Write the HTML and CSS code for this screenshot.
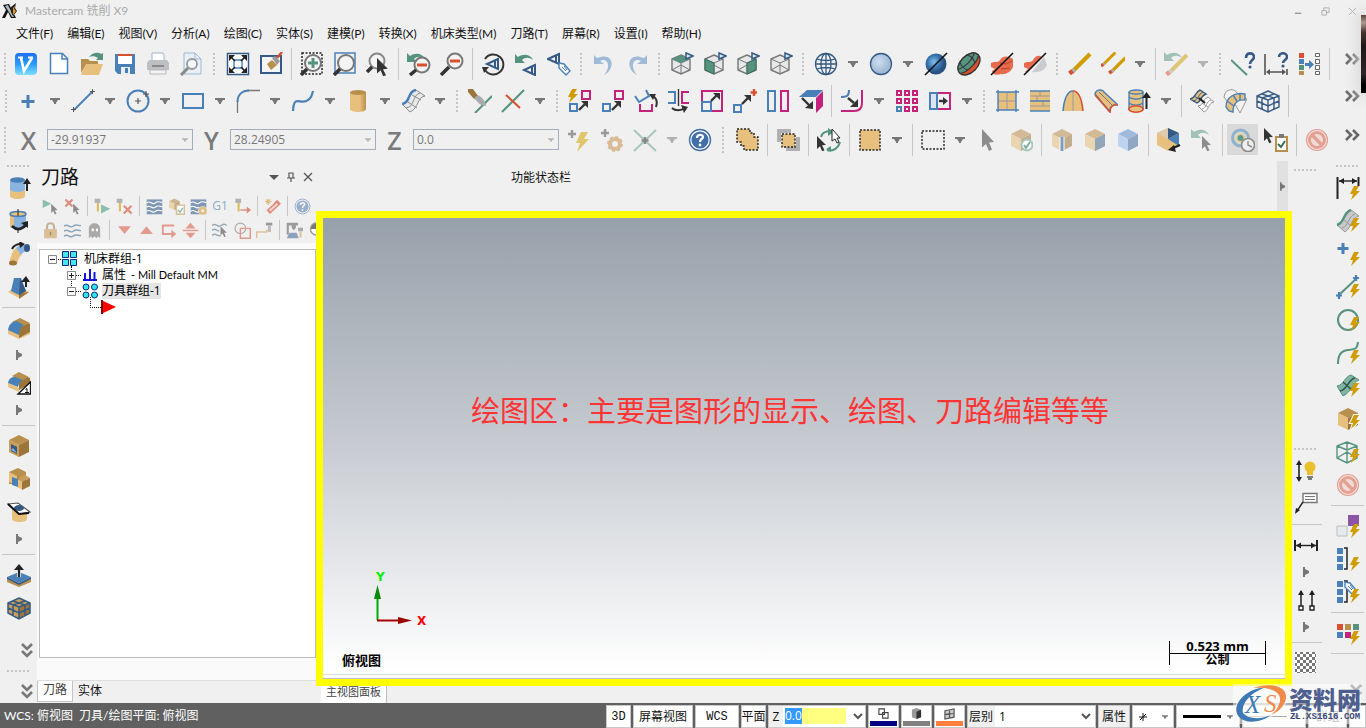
FILE: index.html
```html
<!DOCTYPE html>
<html lang="zh-CN">
<head>
<meta charset="utf-8">
<title>Mastercam 铣削 X9</title>
<link rel="stylesheet" href="styles.css">
</head>
<body>
<svg class="sprite" aria-hidden="true">
<defs>
<linearGradient id="gV" x1="0" y1="0" x2="0" y2="1"><stop offset="0" stop-color="#1d6ff0"/><stop offset=".5" stop-color="#2b9bff"/><stop offset="1" stop-color="#7fe0ff"/></linearGradient>
<linearGradient id="gCyl"><stop offset="0" stop-color="#e8c07d"/><stop offset=".6" stop-color="#e8c07d"/><stop offset="1" stop-color="#b88f4c"/></linearGradient>
<radialGradient id="gBall" cx=".4" cy=".4"><stop offset="0" stop-color="#7fc0f0"/><stop offset=".6" stop-color="#3a76b0"/><stop offset="1" stop-color="#2a5280"/></radialGradient>
<radialGradient id="gPale" cx=".4" cy=".4"><stop offset="0" stop-color="#cfdff2"/><stop offset="1" stop-color="#a3bad4"/></radialGradient>
<pattern id="pChk" width="6" height="6" patternUnits="userSpaceOnUse"><path d="M0 0h3v3H0zM3 3h3v3H3z" fill="#777"/></pattern>
<g id="bolt"><path d="M4 0h5L6 5h4L1 14l2-6H0z" fill="#d09c00"/></g>
<g id="cur"><path d="M0 0l9 9-4 .3 2.5 5-2.3 1-2.2-5L0 13z" fill="#333"/></g>
<g id="curG"><path d="M0 0l9 9-4 .3 2.5 5-2.3 1-2.2-5L0 13z" fill="#8c8c8c"/></g>
<g id="ret"><path d="M0 0l3 3c6-4 13-2 15 3-4-3-8-3-11 0l3 3H0z" fill="#56937e"/></g>
<g id="eye"><path d="M13 1L2 6l11 5z" fill="none" stroke="#345a85" stroke-width="2"/><path d="M10 3v6" stroke="#345a85" stroke-width="2"/></g>
<g id="wire"><path d="M11 3l9 4v11l-9 4-9-4V7z" fill="#e6e8ea" stroke="#777" stroke-width="1.4"/><path d="M2 7l9 4 9-4M11 11v11M2 18l9-5 9 5" fill="none" stroke="#777"/></g>
<g id="flag"><path d="M16 1l7 3-7 3z" fill="#e3eaf2" stroke="#345a85" stroke-width="1.5"/></g>
<g id="pen"><path d="M4 20L22 2" stroke="#d09c00" stroke-width="4"/><path d="M3.500 20.500l3-3" stroke="#aab0bb" stroke-width="4"/><path d="M1.500 21.500l3-2.500" stroke="#d9502f" stroke-width="4.500"/></g>
<g id="box"><path d="M12 1l10 5-10 5L2 6z" fill="#b88f4c"/><path d="M2 6l10 5v12L2 18z" fill="#e8c07d"/><path d="M22 6l-10 5v12l10-5z" fill="#9c753a"/></g>
<g id="q"><circle cx="12" cy="12" r="10.5" fill="#fff" stroke="#426fa8" stroke-width="1.4"/><circle cx="12" cy="12" r="8.6" fill="#426fa8"/><path d="M9 10c0-4 6-4 6-1 0 2-3 2-3 5" fill="none" stroke="#fff" stroke-width="2.2"/><circle cx="12" cy="17" r="1.4" fill="#fff"/></g>
<g id="tag"><path d="M0 0l5 1 6 7-4 4-7-7z" fill="#fff" stroke="#4a80b8" stroke-width="1.4"/><path d="M3 4l4 4M5 3l3 4" stroke="#4a80b8"/></g>
<g id="toolT"><path d="M1 1h8v6H1z" fill="#8a8a8a"/><path d="M4 7h3v12H4z" fill="#d09c00"/></g>
</defs>
<symbol id="vlogo" viewBox="0 0 24 24"><rect x="1" y="1" width="22" height="22" rx="4" fill="url(#gV)"/><path d="M4 5.500h5M14 5.500h5" stroke="#fff" stroke-width="2"/><path d="M7 6l3 13L18 6" fill="none" stroke="#fff" stroke-width="2.600"/></symbol>
<symbol id="new" viewBox="0 0 24 24"><path d="M3.500 1.500h12l5 5v15h-17z" fill="#fff" stroke="#4a80b8" stroke-width="1.500"/><path d="M15 2v5h5" fill="none" stroke="#4a80b8" stroke-width="1.500"/></symbol>
<symbol id="open" viewBox="0 0 24 24"><path d="M1 7h7l2 2h8v4H6L1 21z" fill="#b88f4c"/><path d="M6 12h17l-4 11H1z" fill="#e8c07d"/><path d="M9 5c4-5 9-5 12-3l2-1v7h-7l2-2c-3-2-6-2-9-1z" fill="#56937e"/></symbol>
<symbol id="save" viewBox="0 0 24 24"><path d="M2 2h20v20H5l-3-3z" fill="#4a80b8"/><path d="M5 4h14v8H5z" fill="#fff"/><path d="M5 2h14v2H5z" fill="#d9502f"/><path d="M8 15h9v7H8z" fill="#e9eef4"/><path d="M12 16h3v5h-3z" fill="#4a80b8"/></symbol>
<symbol id="print" viewBox="0 0 24 24"><path d="M7 1h10l1 2v7H6V1z" fill="#fff" stroke="#9db4d0"/><path d="M3 8h18l2 3v7H1v-7z" fill="#bdbfc2"/><path d="M6 13h12v2H6z" fill="#888"/><path d="M4 18h16v4H4z" fill="#f4f4f4" stroke="#b5b7ba"/></symbol>
<symbol id="preview" viewBox="0 0 24 24"><path d="M5 1h11l6 6v15H5z" fill="#e9eff6" stroke="#9db9d6"/><path d="M16 1v6h6" fill="none" stroke="#9db9d6"/><circle cx="13" cy="12" r="5" fill="#f4f6f8" stroke="#999" stroke-width="1.800"/><path d="M9 16l-7 7" stroke="#888" stroke-width="3"/></symbol>
<symbol id="fit" viewBox="0 0 24 24"><path d="M1.500 1.500h21v21h-21z" fill="#fff" stroke="#345a85" stroke-width="1.500"/><path d="M8 8h8v8H8z" fill="#fff" stroke="#4a80b8" stroke-width="1.400"/><path d="M3 3h6L3 9zM21 3v6l-6-6zM3 21v-6l6 6zM21 21h-6l6-6z" fill="#222"/><path d="M4 4l5 5M20 4l-5 5M4 20l5-5M20 20l-5-5" stroke="#222" stroke-width="1.600"/></symbol>
<symbol id="brush" viewBox="0 0 24 24"><path d="M2 4h20v17H2z" fill="#f4f4f4" stroke="#345a85" stroke-width="2"/><path d="M8 12l5-4 5 5-6 5z" fill="#b88f4c"/><path d="M13 6l3-2 5 5-3 4z" fill="#999"/><path d="M18 6l5-6" stroke="#d9502f" stroke-width="2.500"/></symbol>
<symbol id="zwin" viewBox="0 0 24 24"><path d="M2 1h20v21H2z" fill="none" stroke="#222" stroke-width="1.500" stroke-dasharray="2 1.500"/><circle cx="13" cy="11" r="8" fill="#f4f4f4" stroke="#777" stroke-width="2"/><path d="M13 6v10M8 11h10" stroke="#56937e" stroke-width="3"/><path d="M7 17l-6 6" stroke="#333" stroke-width="3.500"/></symbol>
<symbol id="ztgt" viewBox="0 0 24 24"><path d="M2 1h20v20H2z" fill="none" stroke="#4a80b8" stroke-width="1.500"/><circle cx="13" cy="11" r="8" fill="#f4f4f4" stroke="#777" stroke-width="2"/><path d="M7 17l-6 6" stroke="#333" stroke-width="3.500"/></symbol>
<symbol id="zsel" viewBox="0 0 24 24"><circle cx="11" cy="9" r="7.500" fill="#f4f4f4" stroke="#888" stroke-width="2"/><path d="M6 15l-5 5" stroke="#333" stroke-width="3.500"/><use href="#cur" transform="translate(11 6) scale(1.200)"/></symbol>
<symbol id="zprev" viewBox="0 0 24 24"><use href="#ret" x="0" y="1"/><circle cx="15" cy="13" r="7.500" fill="#f4f4f4" stroke="#777" stroke-width="2"/><path d="M10 13h10" stroke="#d9502f" stroke-width="3"/><path d="M9 18l-6 5" stroke="#333" stroke-width="3.500"/></symbol>
<symbol id="zout" viewBox="0 0 24 24"><circle cx="15" cy="9" r="7.500" fill="#f4f4f4" stroke="#777" stroke-width="2"/><path d="M10 9h10" stroke="#d9502f" stroke-width="3"/><path d="M9 15l-8 8" stroke="#333" stroke-width="3.500"/></symbol>
<symbol id="rot" viewBox="0 0 24 24"><path d="M4 7a10 10 0 1 1 0 11" fill="none" stroke="#333" stroke-width="2"/><path d="M1 15h7l-5 6z" fill="#333"/><use href="#eye" x="4" y="6"/></symbol>
<symbol id="eprev" viewBox="0 0 24 24"><use href="#ret" x="1" y="2"/><use href="#eye" x="8" y="12"/></symbol>
<symbol id="etag" viewBox="0 0 24 24"><use href="#eye" x="-1" y="1"/><use href="#tag" x="12" y="11"/></symbol>
<symbol id="undo" viewBox="0 0 24 24"><path d="M2 3v9h10l-4-3c7-4 12 5 4 14 12-6 10-24-7-17z" fill="#a0bbd8"/></symbol>
<symbol id="redo" viewBox="0 0 24 24"><path d="M22 3v9H12l4-3C9 5 4 14 12 23 0 17 2-1 19 6z" fill="#a0bbd8"/></symbol>
<symbol id="c1" viewBox="0 0 24 24"><use href="#wire"/><path d="M2 7l9-4 9 4-9 4z" fill="#56937e"/><use href="#flag"/></symbol>
<symbol id="c2" viewBox="0 0 24 24"><use href="#wire"/><path d="M2 7l9 4v11l-9-4z" fill="#56937e" stroke="#386a58"/><use href="#flag"/></symbol>
<symbol id="c3" viewBox="0 0 24 24"><use href="#wire"/><path d="M20 7l-9 4v11l9-4z" fill="#56937e" stroke="#386a58"/><use href="#flag"/></symbol>
<symbol id="c4" viewBox="0 0 24 24"><use href="#wire"/><use href="#flag"/></symbol>
<symbol id="globe" viewBox="0 0 24 24"><g fill="none" stroke="#345a85" stroke-width="1.300"><circle cx="12" cy="12" r="10.500"/><ellipse cx="12" cy="12" rx="5" ry="10.500"/><path d="M12 1v22M1 12h22M3 7c5 2 13 2 18 0M3 17c5-2 13-2 18 0"/></g></symbol>
<symbol id="ball" viewBox="0 0 24 24"><circle cx="12" cy="12" r="10.500" fill="url(#gPale)" stroke="#345a85" stroke-width="1.300"/></symbol>
<symbol id="ballx" viewBox="0 0 24 24"><circle cx="12" cy="12" r="10.500" fill="url(#gBall)"/><path d="M1 23L23 1" stroke="#111" stroke-width="1.600"/></symbol>
<symbol id="shell" viewBox="0 0 24 24"><g transform="rotate(-45 12 12)"><ellipse cx="12" cy="12" rx="13" ry="8.500" fill="#d9502f" stroke="#333" stroke-width="1.300"/><path d="M-1 12C-1 1 25 1 25 12c-4 5-22 5-26 0z" fill="#56937e" stroke="#333" stroke-width="1.200"/><path d="M7 4.500c-2 3-2 7 0 11M17 4.500c2 3 2 7 0 11M1 8.500c6 3 16 3 22 0" fill="none" stroke="#333"/></g></symbol>
<symbol id="redx" viewBox="0 0 24 24"><path d="M1 11c4-2 7 0 9-3 3-5 9-4 13-1v8c-2 5-8 8-12 7-5 2-9 0-9-3l3-2-4-2z" fill="#e56a4e"/><path d="M10 11l6 1 6-3M11 17l9-1" fill="none" stroke="#b8402a"/><path d="M1 23L23 1" stroke="#111" stroke-width="1.600"/></symbol>
<symbol id="grayx" viewBox="0 0 24 24"><path d="M1 11c4-2 7 0 9-3 3-5 6-5 9-3L5 20H2l3-3-4-2z" fill="#e56a4e"/><path d="M21 5l3 8c-2 5-8 8-15 7z" fill="#c9cbce"/><path d="M1 23L23 1" stroke="#111" stroke-width="1.600"/></symbol>
<symbol id="pencil" viewBox="0 0 24 24"><use href="#pen"/></symbol>
<symbol id="pencils" viewBox="0 0 24 24"><use href="#pen" transform="translate(-1 -1) scale(.7)"/><use href="#pen" transform="translate(7 4) scale(.8)"/></symbol>
<symbol id="pundo" viewBox="0 0 24 24"><g opacity=".5"><use href="#ret"/><use href="#pen" x="1" y="1"/></g></symbol>
<symbol id="lineq" viewBox="0 0 24 24"><path d="M0 8l16 15" stroke="#56937e" stroke-width="2"/><path d="M15 6c0-6 8-6 8-1 0 3-4 3-4 7" fill="none" stroke="#345a85" stroke-width="2.600"/><circle cx="19" cy="15" r="1.600" fill="#345a85"/></symbol>
<symbol id="dimq" viewBox="0 0 24 24"><path d="M1 2v21M23 17v6M3 20h18" stroke="#555" stroke-width="1.600"/><path d="M2 20l4-3v6zM22 20l-4-3v6z" fill="#555"/><path d="M15 5c0-5 8-5 8 0 0 3-4 3-4 6" fill="none" stroke="#345a85" stroke-width="2.600"/><circle cx="19" cy="14" r="1.600" fill="#345a85"/></symbol>
<symbol id="list" viewBox="0 0 24 24"><path d="M2 1h5v5H2z" fill="#d9502f"/><path d="M2 7h5v5H2z" fill="#4a80b8"/><path d="M2 13h5v5H2z" fill="#56937e"/><path d="M2 19h5v4H2z" fill="#b88f4c"/><path d="M8 11h4V8l5 4.500-5 4.500v-3H8z" fill="#4a80b8"/><path d="M18.500 1.500h4v3h-4zM18.500 7.500h4v4h-4zM18.500 13.500h4v4h-4zM18.500 19.500h4v3h-4z" fill="#fff" stroke="#666"/></symbol>
<symbol id="pt" viewBox="0 0 24 24"><path d="M12 6v13M5.500 12.500h13" stroke="#4a80b8" stroke-width="3"/></symbol>
<symbol id="ln" viewBox="0 0 24 24"><path d="M3 21L21 3" stroke="#4a80b8" stroke-width="2"/><path d="M2.500 18v5M0 20.500h5M21.500 0v5M19 2.500h5" stroke="#555"/></symbol>
<symbol id="circ" viewBox="0 0 24 24"><circle cx="12" cy="12" r="10.500" fill="none" stroke="#4a80b8" stroke-width="2"/><path d="M12 9v6M9 12h6M20 2v6M17 5h6" stroke="#555" stroke-width="1.200"/></symbol>
<symbol id="rect" viewBox="0 0 24 24"><path d="M2 5h20v14H2z" fill="none" stroke="#4a80b8" stroke-width="2"/></symbol>
<symbol id="fil" viewBox="0 0 24 24"><path d="M1.500 24V11M11 1.500h13" stroke="#777" stroke-width="1.300"/><path d="M1.500 13C1.500 6 6 1.500 13 1.500" fill="none" stroke="#4a80b8" stroke-width="2"/></symbol>
<symbol id="spl" viewBox="0 0 24 24"><path d="M2 22C3 4 10 17 17 11c4-2 4-6 5-9" fill="none" stroke="#4a80b8" stroke-width="2.200"/></symbol>
<symbol id="cyl" viewBox="0 0 24 24"><path d="M4 3v17c0 4 16 4 16 0V3z" fill="url(#gCyl)"/><ellipse cx="12" cy="3.500" rx="8" ry="2.500" fill="#b88f4c"/></symbol>
<symbol id="surf" viewBox="0 0 24 24"><path d="M1 15C10 14 6 2 15 1l9 6C16 8 18 19 9 23z" fill="#e8e9eb" stroke="#8b8b8b"/><path d="M5 19C14 18 11 6 19 4M7 13l9 6M11 6l9 5" fill="none" stroke="#8b8b8b"/><path d="M1 15C10 14 6 2 15 1" fill="none" stroke="#4a80b8" stroke-width="2.400"/></symbol>
<symbol id="trim" viewBox="0 0 24 24"><path d="M7 24L24 7" stroke="#56937e" stroke-width="2"/><path d="M0 0h5l5 7-4 3-6-7z" fill="#9c753a"/><path d="M6 9l4-3c4 2 8 7 8 11-5 0-8-3-12-8z" fill="#a8abb0"/></symbol>
<symbol id="xx" viewBox="0 0 24 24"><path d="M1 23L23 1" stroke="#56937e" stroke-width="2"/><path d="M5 6l14 13" stroke="#d9502f" stroke-width="2"/></symbol>
<symbol id="t1" viewBox="0 0 24 24"><use href="#bolt"/><path d="M14 2h8v8h-8z" fill="none" stroke="#c4237c" stroke-width="2"/><path d="M2 15h7v7H2z" fill="none" stroke="#4a80b8" stroke-width="2"/><path d="M11 21l6-6" stroke="#333" stroke-width="2.400"/><path d="M13 12h7v7z" fill="#333"/></symbol>
<symbol id="t2" viewBox="0 0 24 24"><path d="M14 2h8v8h-8z" fill="none" stroke="#c4237c" stroke-width="2"/><path d="M2 15h7v7H2z" fill="none" stroke="#4a80b8" stroke-width="2"/><path d="M11 21l6-6" stroke="#333" stroke-width="2.400"/><path d="M13 12h7v7z" fill="#333"/></symbol>
<symbol id="t3" viewBox="0 0 24 24"><path d="M1 7l4 6 10-6-3-6" fill="none" stroke="#4a80b8" stroke-width="2"/><path d="M6 15v7h12v-7" fill="none" stroke="#c4237c" stroke-width="2"/><path d="M22 18c2-6 0-9-3-11" fill="none" stroke="#333" stroke-width="2"/><path d="M15 5h7l-3 6z" fill="#333"/></symbol>
<symbol id="t4" viewBox="0 0 24 24"><path d="M1 3h7v11H1" fill="none" stroke="#4a80b8" stroke-width="2"/><path d="M22 3h-7v11h7" fill="none" stroke="#c4237c" stroke-width="2"/><path d="M11.500 0v17" stroke="#333" stroke-width="1.400"/><path d="M5 19c3 3 9 3 13 0" fill="none" stroke="#333" stroke-width="2"/><path d="M14 16l7 2-4 6z" fill="#333"/></symbol>
<symbol id="t5" viewBox="0 0 24 24"><path d="M2 2h20v20H2z" fill="none" stroke="#c4237c" stroke-width="2"/><path d="M2 13h9v9H2z" fill="#f0f0f0" stroke="#4a80b8" stroke-width="2"/><path d="M11 12l6-6" stroke="#333" stroke-width="2.400"/><path d="M13 4h7v7z" fill="#333"/></symbol>
<symbol id="t6" viewBox="0 0 24 24"><path d="M1 16h7v7H1z" fill="none" stroke="#4a80b8" stroke-width="2"/><path d="M9 15l7-7" stroke="#333" stroke-width="2.400"/><path d="M11 6h7v7z" fill="#333"/><path d="M21 0v7M17.500 3.500h7" stroke="#d9502f" stroke-width="2.400"/></symbol>
<symbol id="t7" viewBox="0 0 24 24"><path d="M2 2h7v20H2z" fill="none" stroke="#4a80b8" stroke-width="2"/><path d="M15 2h7v20h-7z" fill="none" stroke="#c4237c" stroke-width="2"/></symbol>
<symbol id="t8" viewBox="0 0 24 24"><path d="M8 1h16l-7 7H0z" fill="#4a80b8"/><path d="M24 2v15l-7 7V9z" fill="#c4237c"/><path d="M3 9l8 8" stroke="#333" stroke-width="2.400"/><path d="M14 12v8l-8-1z" fill="#333"/></symbol>
<symbol id="off" viewBox="0 0 24 24"><path d="M1 8c6 0 8-1 8-7" fill="none" stroke="#4a80b8" stroke-width="2"/><path d="M1 22h13c6 0 8-3 8-8V1" fill="none" stroke="#c4237c" stroke-width="2"/><path d="M8 9l6 5" stroke="#333" stroke-width="2.400"/><path d="M18 10v8h-8z" fill="#333"/></symbol>
<symbol id="grid9" viewBox="0 0 24 24"><path d="M2 2h4v4H2zM10 2h4v4h-4zM18 2h4v4h-4zM2 10h4v4H2zM10 10h4v4h-4zM18 10h4v4h-4zM10 18h4v4h-4zM18 18h4v4h-4z" fill="none" stroke="#c4237c" stroke-width="2"/><path d="M2 18h4v4H2z" fill="none" stroke="#4a80b8" stroke-width="2"/></symbol>
<symbol id="drag" viewBox="0 0 24 24"><path d="M9 4h13v16H9z" fill="none" stroke="#c4237c" stroke-width="2"/><path d="M2 4h7v16H2z" fill="#dbe6f2" stroke="#4a80b8" stroke-width="2"/><path d="M11 12h5" stroke="#333" stroke-width="2.400"/><path d="M15 8l5 4-5 4z" fill="#333"/></symbol>
<symbol id="s1" viewBox="0 0 24 24"><path d="M3 3h18v18H3z" fill="#e8c07d"/><path d="M12 3v18M3 12h18" stroke="#9a9a9a"/><path d="M3 1v22M21 1v22M1 3h23M1 21h23" stroke="#4a80b8" stroke-width="1.400"/></symbol>
<symbol id="s2" viewBox="0 0 24 24"><path d="M2 2h20v20H2z" fill="#e8c07d"/><path d="M2 7h20M2 17h20M9 7v5M15 12v5M12 2v5" stroke="#9a9a9a"/><path d="M2 2h20M2 12h20M2 22h20" stroke="#4a80b8" stroke-width="1.600"/></symbol>
<symbol id="s3" viewBox="0 0 24 24"><path d="M2 22C3 12 5 2 12 2s9 10 10 20z" fill="#e8c07d"/><path d="M12 2v20" stroke="#9a9a9a"/><path d="M2 22C3 12 5 2 12 2" fill="none" stroke="#4a80b8" stroke-width="1.600"/><path d="M12 2c7 0 9 10 10 20" fill="none" stroke="#d9502f" stroke-width="1.600"/></symbol>
<symbol id="s4" viewBox="0 0 24 24"><path d="M1 5c1-5 8-5 9-2l14 13c-5-1-9 2-8 7z" fill="#e8c07d" stroke="#4a80b8" stroke-width="1.400"/><path d="M5 3l14 14" stroke="#777"/><path d="M1 6l15 17c0-5 3-8 8-7" fill="none" stroke="#d9502f" stroke-width="1.600"/></symbol>
<symbol id="s5" viewBox="0 0 24 24"><path d="M2 3v18c0 3 14 3 14 0V3z" fill="#e8c07d"/><ellipse cx="9" cy="3" rx="7" ry="2" fill="#e8c07d" stroke="#4a80b8" stroke-width="1.400"/><path d="M2 3v18M16 3v18M2 8c4 3 10 3 14 0M2 14c4 3 10 3 14 0" fill="none" stroke="#4a80b8" stroke-width="1.400"/><path d="M2 19c4-3 10-3 14 0v2c-3 3-11 3-14 0z" fill="none" stroke="#d9502f" stroke-width="1.400"/><path d="M19.500 20V7" stroke="#222" stroke-width="2"/><path d="M15 9l4.500-6L24 9z" fill="#222"/></symbol>
<symbol id="s6" viewBox="0 0 24 24"><path d="M0 10c6-1 5-7 10-9l6 4c-6 2-5 8-9 9z" fill="#e8c07d" stroke="#345a85" stroke-width="1.400"/><path d="M3 12c6-1 5-7 10-9M4 7l8 5" fill="none" stroke="#345a85"/><path d="M8 17c6-1 5-7 10-9l6 5c-6 1-5 8-10 10z" fill="#fff" stroke="#999"/><path d="M12 20c5-1 4-8 9-9M12 14l6 4" fill="none" stroke="#999"/><path d="M9 9l6 5" stroke="#222" stroke-width="2"/></symbol>
<symbol id="s7" viewBox="0 0 24 24"><path d="M1 8C2-1 12-1 14 4l10 6-7 14-5-9-8-3z" fill="#f2f2f2" stroke="#999"/><path d="M3 18C3 8 12 3 22 5v6c-7-1-12 3-12 12l-4-1z" fill="#e8c07d" stroke="#4a80b8" stroke-width="1.400"/><path d="M4 12l7 5M10 6l4 6M17 4v7" stroke="#4a80b8" stroke-width="1.400"/></symbol>
<symbol id="s8" viewBox="0 0 24 24"><g fill="none" stroke="#345a85" stroke-width="1.400"><path d="M12 2l11 5v11l-11 5-11-5V7zM1 7l11 4 11-4M12 11v12M1 12l11 5 11-5M6 5l12 4v11M18 5L6 9v11"/></g></symbol>
<symbol id="pb" viewBox="0 0 24 24"><path d="M5 2v8M1 6h8" stroke="#999" stroke-width="2.400"/><path d="M14 4h7l-4 7h5L10 24l3-9H9z" fill="#e0c56b"/></symbol>
<symbol id="pg" viewBox="0 0 24 24"><path d="M5 1v8M1 5h8" stroke="#999" stroke-width="2.400"/><circle cx="15" cy="16" r="5" fill="none" stroke="#d8bc96" stroke-width="4"/><circle cx="15" cy="16" r="7" fill="none" stroke="#d8bc96" stroke-width="2" stroke-dasharray="3 2.500"/></symbol>
<symbol id="px" viewBox="0 0 24 24"><path d="M1 2l22 21M23 2L1 23" stroke="#a8c6bc" stroke-width="2"/><path d="M12 9v7M8.500 12.500h7" stroke="#888" stroke-width="2.400"/></symbol>
<symbol id="help" viewBox="0 0 24 24"><use href="#q"/></symbol>
<symbol id="sel1" viewBox="0 0 24 24"><path d="M2 1h13v4h4v4h4v13H9v-4H6v-4H2z" fill="#e8c07d" stroke="#222" stroke-width="1.400" stroke-dasharray="2 1.500"/></symbol>
<symbol id="sel2" viewBox="0 0 24 24"><path d="M1 1h14v4H5v9H1zM10 23h14V9h-4v10H10z" fill="#b0b0b0"/><path d="M6 6h13v13H6z" fill="#e8c07d" stroke="#222" stroke-width="1.400" stroke-dasharray="2 1.500"/></symbol>
<symbol id="sel3" viewBox="0 0 24 24"><path d="M4 9c1-5 7-7 12-5M10 22c7 2 12-3 13-8" fill="none" stroke="#56937e" stroke-width="2"/><path d="M11 0l6 4-6 4zM14 18v6l-5-3z" fill="#56937e"/><use href="#cur" x="0" y="8"/><path d="M15 1l8 9h-3l2 4-2 1-2-4-3 2z" fill="#fff" stroke="#222"/></symbol>
<symbol id="sel4" viewBox="0 0 24 24"><path d="M2 2h20v20H2z" fill="#e8c07d" stroke="#222" stroke-width="1.400" stroke-dasharray="2 1.500"/></symbol>
<symbol id="sel5" viewBox="0 0 24 24"><path d="M1 3h22v18H1z" fill="none" stroke="#222" stroke-width="1.400" stroke-dasharray="2 1.500"/></symbol>
<symbol id="cursor" viewBox="0 0 24 24"><path d="M6 1l12 13-5 .4 3 7-3 1.500-3-7-4 3.500z" fill="#8c8c8c"/></symbol>
<symbol id="boxok" viewBox="0 0 24 24"><use href="#box" opacity=".55"/><circle cx="18" cy="17" r="5.500" fill="#fff" stroke="#a8c6bc" stroke-width="2"/><path d="M15 17l2 3 4-6" fill="none" stroke="#7fae9f" stroke-width="2"/></symbol>
<symbol id="b1" viewBox="0 0 24 24"><use href="#box" opacity=".55"/><path d="M12 9v14" stroke="#fff" stroke-width="5"/><path d="M12 9v14" stroke="#7d9cbd" stroke-width="3"/></symbol>
<symbol id="b2" viewBox="0 0 24 24"><use href="#box" opacity=".55"/><path d="M22 6l-10 5v12l10-5z" fill="#93a5b8"/></symbol>
<symbol id="b3" viewBox="0 0 24 24"><path d="M12 1l10 5-10 5L2 6z" fill="#9fbbdb"/><path d="M2 6l10 5v12L2 18z" fill="#bcd4ef"/><path d="M22 6l-10 5v12l10-5z" fill="#8fa7c1"/></symbol>
<symbol id="b4" viewBox="0 0 24 24"><path d="M11 0l11 5v12l-11 6-11-6V5z" fill="#e8c07d"/><path d="M0 5l11-5v11z" fill="#dccbb0"/><path d="M11 0l11 5-11 6z" fill="#345a85"/><path d="M22 5v13l-11-7z" fill="#4a80b8"/><path d="M23 17l-7 3" stroke="#222" stroke-width="2.400"/><path d="M11 22l6-5 2 7z" fill="#222"/></symbol>
<symbol id="b5" viewBox="0 0 24 24"><use href="#ret" x="1" y="1" opacity=".5"/><use href="#curG" x="12" y="8"/></symbol>
<symbol id="b6" viewBox="0 0 24 24"><circle cx="9.500" cy="10" r="8" fill="none" stroke="#8fb1c9" stroke-width="3"/><circle cx="9.500" cy="10" r="5" fill="#e4cfa8"/><circle cx="9.500" cy="10" r="3" fill="#5c9e8a"/><circle cx="17" cy="17" r="6.500" fill="#eee" stroke="#8c8c8c" stroke-width="1.600"/><path d="M17 13v4l4 2" fill="none" stroke="#8c8c8c" stroke-width="1.400"/></symbol>
<symbol id="b7" viewBox="0 0 24 24"><use href="#cur" x="0" y="0"/><path d="M12 9h11v14H12z" fill="#fff" stroke="#b88f4c" stroke-width="2"/><path d="M15 6h5v4h-5z" fill="#777"/><path d="M14 16l3 3 4-6" fill="none" stroke="#386a58" stroke-width="2"/></symbol>
<symbol id="no" viewBox="0 0 24 24"><circle cx="12" cy="12" r="10.500" fill="#fbe9e5" stroke="#e4a092" stroke-width="1.200"/><circle cx="12" cy="12" r="7.500" fill="#f0dcd8" stroke="#e4a092" stroke-width="3"/><path d="M7 7l10 10" stroke="#e4a092" stroke-width="3.500"/></symbol>
<symbol id="l1" viewBox="0 0 24 24"><path d="M3 12v8c0 4 15 4 15 0v-8z" fill="#e8c07d"/><path d="M3 4v9c0 4 15 4 15 0V4z" fill="#8ab4e0"/><ellipse cx="10.500" cy="4" rx="7.500" ry="2.800" fill="#4a80b8"/><path d="M20 15V6" stroke="#222" stroke-width="2"/><path d="M16 8l4-6 4 6z" fill="#222"/></symbol>
<symbol id="l2" viewBox="0 0 24 24"><path d="M3 5v12c0 4 16 4 16 0V5z" fill="#8ab4e0"/><path d="M3 5v12l4 2V7z" fill="#e8c07d"/><ellipse cx="11" cy="5" rx="8" ry="2.500" fill="#e8c07d" stroke="#4a80b8" stroke-width="1.500"/><path d="M11 0v7M11 20v4" stroke="#222"/><path d="M5 17c4 4 9 4 14-1" fill="none" stroke="#222" stroke-width="2.600"/><path d="M14 14l7-2v7z" fill="#222"/></symbol>
<symbol id="l3" viewBox="0 0 24 24"><path d="M2 21C4 14 5 9 9 6l6 7c-3 1-4 6-5 9z" fill="#e8c07d"/><path d="M9 6c3-3 6-3 10-3l2 6c-3 0-5 1-7 4z" fill="#8ab4e0"/><ellipse cx="20" cy="6" rx="3" ry="4" fill="#345a85"/><ellipse cx="6" cy="21" rx="4" ry="2.500" fill="#9c753a"/><path d="M5 7c2-4 5-5 9-5" fill="none" stroke="#222" stroke-width="2"/><path d="M12-1l6 3-5 4z" fill="#222"/></symbol>
<symbol id="l4" viewBox="0 0 24 24"><path d="M1 17l4-3h12l5 3-10 6z" fill="#e8c07d"/><path d="M12 18l10-1-10 7z" fill="#9c753a"/><path d="M7 3h7l5 13-7 4-8-4z" fill="#4a80b8"/><path d="M13 3l6 13-7 4z" fill="#345a85"/><path d="M19 12V5" stroke="#222" stroke-width="2"/><path d="M14 7l5-6 4 6z" fill="#222"/></symbol>
<symbol id="l5" viewBox="0 0 24 24"><path d="M1 13l11 5 11-5v5l-11 5-11-5z" fill="#e8c07d"/><path d="M12 3l11 5v8l-11 6v-8z" fill="#9c753a"/><path d="M5 6l8-4 10 5-9 4z" fill="#b88f4c"/><path d="M1 14C2 8 5 6 9 5l8 4c-4 2-5 6-5 10z" fill="#4a80b8"/></symbol>
<symbol id="l6" viewBox="0 0 24 24"><path d="M1 12l11 5v4L1 16z" fill="#e8c07d"/><path d="M12 2l11 5v6l-11 6z" fill="#9c753a"/><path d="M5 5l7-4 10 5-8 4z" fill="#b88f4c"/><path d="M1 12c1-5 4-6 7-6l8 3c-4 2-4 4-5 7z" fill="#4a80b8"/><path d="M11 23L23.500 11v12z" fill="#fff" stroke="#111" stroke-width="1.300"/><path d="M18.500 18.500l1.500-1v4M18 21.500h4" fill="none" stroke="#111"/></symbol>
<symbol id="l7" viewBox="0 0 24 24"><use href="#box"/><path d="M2 6l10 5v12L2 18z" fill="#c89e5a"/><path d="M4 10l6 3v7l-6-3z" fill="#345a85"/><path d="M6 14l4 5-6-3z" fill="#8ab4e0"/></symbol>
<symbol id="l8" viewBox="0 0 24 24"><path d="M2 5l9-4 8 4v12H2z" fill="#b88f4c"/><path d="M2 5l8 4v9l-8-3z" fill="#e8c07d"/><path d="M12 11l6-3 5 3-9 4z" fill="#c89e5a"/><path d="M10 12l6 3v8l-6-3z" fill="#e8c07d"/><path d="M23 11l-8 4v8l8-4z" fill="#9c753a"/><path d="M5 10l6 2v8l-6-2z" fill="#4a80b8"/></symbol>
<symbol id="l9" viewBox="0 0 24 24"><path d="M5 9h15v10c0 4-15 4-15 0z" fill="#e8c07d"/><path d="M1 4l10-1 12 9-11 2z" fill="#fff" stroke="#555" stroke-width="1.200"/><ellipse cx="12" cy="8" rx="5" ry="3" fill="#345a85"/><path d="M1 4l11 10 10-1" fill="none" stroke="#111" stroke-width="2"/></symbol>
<symbol id="l10" viewBox="0 0 24 24"><path d="M0 16l12 5 12-5v3l-12 5-12-5z" fill="#b88f4c"/><path d="M0 14l12-5 12 5-12 6z" fill="#4a80b8"/><path d="M0 14l12 6 12-6v2l-12 6-12-6z" fill="#345a85"/><path d="M12 14V4" stroke="#fff" stroke-width="4"/><path d="M12 14V5" stroke="#222" stroke-width="2.400"/><path d="M7 7l5-6 5 6z" fill="#222"/></symbol>
<symbol id="l11" viewBox="0 0 24 24"><path d="M12 2l11 5v10l-11 6-11-6V7z" fill="#c89e5a"/><path d="M23 7v10l-11 6V11z" fill="#9c753a"/><path d="M12 2l11 5v10l-11 6-11-6V7zM1 7l11 4 11-4M12 11v12M1 12l11 5 11-5M6 5l12 4v11M18 5L6 9v11" fill="none" stroke="#345a85" stroke-width="1.500"/></symbol>
<symbol id="r1" viewBox="0 0 24 24"><path d="M1.500 1v22M22.500 1v9" stroke="#222" stroke-width="2"/><path d="M3 5h18" stroke="#222" stroke-width="1.400"/><path d="M3 5l5-3v6zM21 5l-5-3v6z" fill="#222"/><use href="#bolt" x="14" y="10"/></symbol>
<symbol id="r2" viewBox="0 0 24 24"><path d="M1 16C9 14 7 3 15 1l8 6C15 9 16 18 9 23z" fill="#c8cacd" stroke="#999"/><path d="M6 19c7-2 6-12 13-14M7 10l8 7" fill="none" stroke="#999"/><path d="M1 16C9 14 7 3 15 1" fill="none" stroke="#56937e" stroke-width="2.400"/><use href="#bolt" x="14" y="9"/></symbol>
<symbol id="r3" viewBox="0 0 24 24"><path d="M7 1v11M1.500 6.500h11" stroke="#4a80b8" stroke-width="3"/><use href="#bolt" x="14" y="10"/></symbol>
<symbol id="r4" viewBox="0 0 24 24"><path d="M4 19L20 4" stroke="#56937e" stroke-width="2"/><path d="M3 17v7M0 20.500h6M20 0v6M17 3h6" stroke="#4a80b8" stroke-width="2.200"/><use href="#bolt" x="14" y="9"/></symbol>
<symbol id="r5" viewBox="0 0 24 24"><circle cx="12" cy="12" r="10" fill="none" stroke="#56937e" stroke-width="2"/><use href="#bolt" x="14" y="9"/></symbol>
<symbol id="r6" viewBox="0 0 24 24"><path d="M2 23C2 15 4 10 12 9s9-1 10-8" fill="none" stroke="#56937e" stroke-width="2"/><use href="#bolt" x="14" y="9"/></symbol>
<symbol id="r7" viewBox="0 0 24 24"><path d="M1 12C8 11 8 3 15 1l8 5C16 8 16 18 7 22z" fill="#7fb5a2" stroke="#56937e"/><path d="M4 17c8-1 8-12 15-13M7 8l9 8" fill="none" stroke="#2f5548" stroke-width="1.500"/><use href="#bolt" x="14" y="9"/></symbol>
<symbol id="r8" viewBox="0 0 24 24"><use href="#box"/><use href="#bolt" x="14" y="8" stroke="#fff" stroke-width="2"/><use href="#bolt" x="14" y="8"/></symbol>
<symbol id="r9" viewBox="0 0 24 24"><path d="M11 2l10 4v12l-10 5-10-5V6zM1 6l10 4 10-4M11 2v21M1 18l10-6 10 6" fill="none" stroke="#56937e" stroke-width="1.400"/><use href="#bolt" x="14" y="9"/></symbol>
<symbol id="r10" viewBox="0 0 24 24"><path d="M12 1h11v11H12z" fill="#8b56a8"/><path d="M1 12h10v10H1z" fill="#e6eaea" stroke="#b8bec2"/><use href="#bolt" x="14" y="10"/></symbol>
<symbol id="r11" viewBox="0 0 24 24"><path d="M1 1h6v6H1zM1 9h6v6H1zM1 17h6v6H1z" fill="#4a80b8"/><path d="M8 1h3v21H8" fill="none" stroke="#222" stroke-width="1.500"/><use href="#bolt" x="14" y="10"/></symbol>
<symbol id="r12" viewBox="0 0 24 24"><path d="M1 1h6v6H1zM1 9h6v6H1zM1 17h6v6H1z" fill="#4a80b8"/><path d="M8 1h3v21H8" fill="none" stroke="#222" stroke-width="1.500"/><use href="#tag" x="9" y="2"/><use href="#bolt" x="14" y="9"/></symbol>
<symbol id="r13" viewBox="0 0 24 24"><path d="M1 3h6v6H1z" fill="#d9502f"/><path d="M9 3h6v6H9z" fill="#b88f4c"/><path d="M17 3h6v6h-6z" fill="#56937e"/><path d="M1 11h6v6H1z" fill="#4a80b8"/><path d="M9 11h6v6H9z" fill="#c4237c"/><use href="#bolt" x="14" y="10"/></symbol>
<symbol id="m1" viewBox="0 0 24 24"><path d="M5 3v18" stroke="#222" stroke-width="1.600"/><path d="M2 6l3-5 3 5zM2 18l3 5 3-5z" fill="#222"/><circle cx="16" cy="8" r="5.500" fill="#eac12d"/><path d="M13 12h6v4h-6z" fill="#eac12d"/><path d="M13 18h6M14 20h4" stroke="#555" stroke-width="1.500"/></symbol>
<symbol id="m2" viewBox="0 0 24 24"><path d="M9 1.500h14v9H9z" fill="#fff" stroke="#777" stroke-width="1.400"/><path d="M11 4.500h10M11 7.500h10" stroke="#777"/><path d="M9 10l-6 9" stroke="#222" stroke-width="1.400"/><path d="M1 22l1-6 4 2z" fill="#222"/></symbol>
<symbol id="m3" viewBox="0 0 24 24"><path d="M1 7v11M23 7v11" stroke="#222" stroke-width="2"/><path d="M2 12.500h20" stroke="#222" stroke-width="1.400"/><path d="M2 12.500l5-3v6zM22 12.500l-5-3v6z" fill="#222"/></symbol>
<symbol id="m4" viewBox="0 0 24 24"><path d="M7 3v15M18 3v15" stroke="#222" stroke-width="1.500"/><path d="M4 7l3-5 3 5zM15 7l3-5 3 5z" fill="#222"/><path d="M5 18h4v4H5zM16 18h4v4h-4z" fill="#fff" stroke="#222" stroke-width="1.400"/></symbol>
<symbol id="m5" viewBox="0 0 24 24"><path d="M1 1h21v21H1z" fill="#fff"/><path d="M1 1h21v21H1z" fill="url(#pChk)"/></symbol>
<symbol id="p1" viewBox="0 0 24 24"><path d="M1 2l12 6-12 6z" fill="#8cbcae"/><use href="#curG" x="13" y="8"/></symbol>
<symbol id="p2" viewBox="0 0 24 24"><path d="M2 2l10 10M12 2L2 12" stroke="#e08c7c" stroke-width="3"/><use href="#curG" x="13" y="8"/></symbol>
<symbol id="p3" viewBox="0 0 24 24"><use href="#toolT" opacity=".6"/><path d="M10 9l13 6-13 7z" fill="#8cbcae"/></symbol>
<symbol id="p4" viewBox="0 0 24 24"><use href="#toolT" opacity=".6"/><path d="M11 11l11 11M22 11L11 22" stroke="#e08c7c" stroke-width="3"/></symbol>
<symbol id="p5" viewBox="0 0 24 24"><path d="M1 2h22v21H1z" fill="#7f97b3"/><path d="M1 7c5-5 7 4 12 0s7 0 10-1M1 13c5-5 7 4 12 0s7 0 10-1M1 19c5-5 7 4 12 0s7 0 10-1" fill="none" stroke="#fff" stroke-width="1.600"/></symbol>
<symbol id="p6" viewBox="0 0 24 24"><use href="#box" transform="scale(.75)" opacity=".6"/><path d="M12 10h11v13H12z" fill="#fff" stroke="#d6bd92" stroke-width="2"/><path d="M14 17l3 3 4-6" fill="none" stroke="#8cbcae" stroke-width="2"/></symbol>
<symbol id="p7" viewBox="0 0 24 24"><path d="M1 2h22v21H1z" fill="#7f97b3"/><path d="M1 7c5-5 7 4 12 0s7 0 10-1M1 13c5-5 7 4 12 0M1 19c5-5 7 4 12 0" fill="none" stroke="#fff" stroke-width="1.600"/><circle cx="18" cy="18" r="6.500" fill="#f0f0f0"/><circle cx="18" cy="18" r="4" fill="none" stroke="#e0bd80" stroke-width="3.500"/></symbol>
<symbol id="p9" viewBox="0 0 24 24"><use href="#toolT" opacity=".6" x="1"/><path d="M9 17h10" stroke="#e08c7c" stroke-width="2"/><path d="M18 12l6 5-6 5z" fill="#e08c7c"/></symbol>
<symbol id="p10" viewBox="0 0 24 24"><path d="M6 20L19 8l-3-3" fill="none" stroke="#df8a7a" stroke-width="7"/><path d="M8 18L19 8" stroke="#f2d6cf" stroke-width="3"/><path d="M6 1v9M2 5h9M3 2l6 6M9 2L3 8" stroke="#e0bd80" stroke-width="1.500"/></symbol>
<symbol id="p11" viewBox="0 0 24 24"><use href="#q" opacity=".5"/></symbol>
<symbol id="k1" viewBox="0 0 24 24"><path d="M7 11V7c0-7 10-7 10 0v4" fill="none" stroke="#c3b398" stroke-width="3"/><path d="M3 10h18v13H3z" fill="#d8bf95"/><path d="M11 14h2v5h-2z" fill="#a08a60"/></symbol>
<symbol id="k2" viewBox="0 0 24 24"><path d="M0 6c6-5 8 4 13 0s8 0 11-1M0 13c6-5 8 4 13 0s8 0 11-1M0 20c6-5 8 4 13 0s8 0 11-1" fill="none" stroke="#8ba2bd" stroke-width="2"/></symbol>
<symbol id="k3" viewBox="0 0 24 24"><path d="M4 23V10C4-1 20-1 20 10v13l-3-3-2 3-3-3-3 3-2-3z" fill="#a9a9a9"/><path d="M8 9h3v4H8zM14 9h3v4h-3z" fill="#fff"/></symbol>
<symbol id="k4" viewBox="0 0 24 24"><path d="M3 6h18l-9 11z" fill="#e29a8c"/></symbol>
<symbol id="k5" viewBox="0 0 24 24"><path d="M3 17h18L12 6z" fill="#e29a8c"/></symbol>
<symbol id="k6" viewBox="0 0 24 24"><path d="M20 5H4v12h13" fill="none" stroke="#e29a8c" stroke-width="2.600"/><path d="M16 11l7 6-7 6z" fill="#e29a8c"/></symbol>
<symbol id="k7" viewBox="0 0 24 24"><path d="M5 9l7-8 7 8zM5 15l7 8 7-8zM1 11h22v2H1z" fill="#e29a8c"/></symbol>
<symbol id="k8" viewBox="0 0 24 24"><path d="M0 5c6-5 8 4 13 0s6 0 8-1M0 12c6-5 6 2 10 0M0 19c6-5 6 2 12 0" fill="none" stroke="#9aa7b5" stroke-width="2"/><use href="#curG" x="12" y="6"/></symbol>
<symbol id="k9" viewBox="0 0 24 24"><circle cx="9" cy="9" r="7.500" fill="none" stroke="#aaa" stroke-width="1.600"/><path d="M9 9h14v14H9z" fill="none" stroke="#e29a8c" stroke-width="2"/></symbol>
<symbol id="k10" viewBox="0 0 24 24"><path d="M1 23V14h14v-2h6" fill="none" stroke="#dcc39a" stroke-width="2"/><path d="M14 1h9v4h-9z" fill="#999"/><path d="M17 5h4v9h-4z" fill="#bbb"/></symbol>
<symbol id="k11" viewBox="0 0 24 24"><path d="M1 1h16v4H1zM1 5h3v13H1zM8 5h6v3l-3 4-3-4z" fill="#9c9c9c"/><path d="M5 15h10l3 8H1z" fill="#8ba2bd"/><path d="M17 8h7v5h-7z" fill="#aaa"/><path d="M19 13h3v9h-3z" fill="#dcc39a"/></symbol>
<symbol id="k12" viewBox="0 0 24 24"><circle cx="12" cy="10" r="8.500" fill="#fff" stroke="#999" stroke-width="2"/><path d="M12 2a8 8 0 0 0-8 8h8zM12 10v8a8 8 0 0 0 8-8z" fill="#777"/></symbol>
<symbol id="chev" viewBox="0 0 16 12"><path d="M2 1l5 5-5 5M9 1l5 5-5 5" fill="none" stroke="#666" stroke-width="2.600"/></symbol>
<symbol id="chevd" viewBox="0 0 12 16"><path d="M1 2l5 5 5-5M1 9l5 5 5-5" fill="none" stroke="#777" stroke-width="2.600"/></symbol>
<symbol id="dn" viewBox="0 0 10 6"><path d="M0 0h10v2H8L6 5v1H4V5L2 2H0z" fill="#777"/></symbol>
<symbol id="rt" viewBox="0 0 6 10"><path d="M0 0h2v2l4 2v2L2 8v2H0z" fill="#777"/></symbol>
<symbol id="vee" viewBox="0 0 10 8"><path d="M1 1l4 4 4-4" fill="none" stroke="#555" stroke-width="2"/></symbol>
</svg>

<header class="title">
  <svg class="app" viewBox="0 0 16 16"><path d="M1 2l6-1 7 14H9L6 9l-3 6H0l4-8z" fill="#111"/><path d="M3 3l3-1 6 12h-2z" fill="#aeb8c0"/><path d="M9 4l5-4-1 5 2 3-4 5-2-4z" fill="#222"/><path d="M11 5l2-2-1 3 2 2-3 4z" fill="#e0a020"/></svg>
  <h1>Mastercam 铣削 X9</h1>
  <button class="win" aria-label="最小化"><svg viewBox="0 0 10 10"><path d="M1 7h7" stroke="#999" stroke-width="1.500"/></svg></button>
  <button class="win" aria-label="还原"><svg viewBox="0 0 10 10"><path d="M1 4h5v5H1zM3 4V1h6v5H6" fill="none" stroke="#aaa"/></svg></button>
  <button class="win" aria-label="关闭"><svg viewBox="0 0 10 10"><path d="M1 1l8 8M9 1L1 9" stroke="#aaa"/></svg></button>
</header>

<nav class="menu">
  <button>文件(F)</button><button>编辑(E)</button><button>视图(V)</button><button>分析(A)</button><button>绘图(C)</button><button>实体(S)</button><button>建模(P)</button><button>转换(X)</button><button>机床类型(M)</button><button>刀路(T)</button><button>屏幕(R)</button><button>设置(I)</button><button>帮助(H)</button>
</nav>

<div class="bar bar1">
  <i class="grip first"></i>
  <button class="b" aria-label="V"><svg><use href="#vlogo"/></svg></button>
  <button class="b" aria-label="新建"><svg><use href="#new"/></svg></button>
  <button class="b" aria-label="打开"><svg><use href="#open"/></svg></button>
  <button class="b" aria-label="保存"><svg><use href="#save"/></svg></button>
  <button class="b" aria-label="打印"><svg><use href="#print"/></svg></button>
  <button class="b" aria-label="打印预览"><svg><use href="#preview"/></svg></button>
  <i class="grip wide"></i>
  <button class="b" aria-label="适度化"><svg><use href="#fit"/></svg></button>
  <button class="b" aria-label="重画"><svg><use href="#brush"/></svg></button>
  <i class="sep"></i>
  <button class="b" aria-label="视窗放大"><svg><use href="#zwin"/></svg></button>
  <button class="b" aria-label="目标放大"><svg><use href="#ztgt"/></svg></button>
  <button class="b" aria-label="选择放大"><svg><use href="#zsel"/></svg></button>
  <i class="sep"></i>
  <button class="b" aria-label="上次缩放"><svg><use href="#zprev"/></svg></button>
  <button class="b" aria-label="缩小"><svg><use href="#zout"/></svg></button>
  <i class="sep"></i>
  <button class="b" aria-label="旋转视图"><svg><use href="#rot"/></svg></button>
  <button class="b" aria-label="上一视图"><svg><use href="#eprev"/></svg></button>
  <button class="b" aria-label="命名视图"><svg><use href="#etag"/></svg></button>
  <i class="grip"></i>
  <button class="b" aria-label="撤销"><svg><use href="#undo"/></svg></button>
  <button class="b" aria-label="重做"><svg><use href="#redo"/></svg></button>
  <i class="grip"></i>
  <button class="b" aria-label="俯视图"><svg><use href="#c1"/></svg></button>
  <button class="b" aria-label="前视图"><svg><use href="#c2"/></svg></button>
  <button class="b" aria-label="右视图"><svg><use href="#c3"/></svg></button>
  <button class="b" aria-label="等视图"><svg><use href="#c4"/></svg></button>
  <i class="grip"></i>
  <button class="b" aria-label="线框"><svg><use href="#globe"/></svg></button><button class="d" aria-label="更多"><svg><use href="#dn"/></svg></button>
  <button class="b" aria-label="着色"><svg><use href="#ball"/></svg></button><button class="d" aria-label="更多"><svg><use href="#dn"/></svg></button>
  <button class="b" aria-label="半透明"><svg><use href="#ballx"/></svg></button>
  <button class="b" aria-label="背面"><svg><use href="#shell"/></svg></button>
  <button class="b" aria-label="刀具"><svg><use href="#redx"/></svg></button>
  <button class="b" aria-label="材料"><svg><use href="#grayx"/></svg></button>
  <i class="grip"></i>
  <button class="b" aria-label="删除"><svg><use href="#pencil"/></svg></button>
  <button class="b" aria-label="删除重复"><svg><use href="#pencils"/></svg></button><button class="d" aria-label="更多"><svg><use href="#dn"/></svg></button>
  <i class="sep"></i>
  <button class="b" aria-label="恢复删除"><svg><use href="#pundo"/></svg></button><button class="d dim" aria-label="更多"><svg><use href="#dn"/></svg></button>
  <i class="grip"></i>
  <button class="b" aria-label="分析图素"><svg><use href="#lineq"/></svg></button>
  <button class="b" aria-label="分析距离"><svg><use href="#dimq"/></svg></button>
  <button class="b" aria-label="属性"><svg><use href="#list"/></svg></button>
  <i class="sep"></i>
  <button class="more" aria-label="展开"><svg><use href="#chev"/></svg></button>
</div>

<div class="bar bar2">
  <i class="grip first"></i>
  <button class="b" aria-label="点"><svg><use href="#pt"/></svg></button><button class="d" aria-label="更多"><svg><use href="#dn"/></svg></button>
  <button class="b" aria-label="线"><svg><use href="#ln"/></svg></button><button class="d" aria-label="更多"><svg><use href="#dn"/></svg></button>
  <button class="b" aria-label="圆"><svg><use href="#circ"/></svg></button><button class="d" aria-label="更多"><svg><use href="#dn"/></svg></button>
  <button class="b" aria-label="矩形"><svg><use href="#rect"/></svg></button><button class="d" aria-label="更多"><svg><use href="#dn"/></svg></button>
  <button class="b" aria-label="圆角"><svg><use href="#fil"/></svg></button><button class="d" aria-label="更多"><svg><use href="#dn"/></svg></button>
  <button class="b" aria-label="曲线"><svg><use href="#spl"/></svg></button><button class="d" aria-label="更多"><svg><use href="#dn"/></svg></button>
  <button class="b" aria-label="圆柱"><svg><use href="#cyl"/></svg></button><button class="d" aria-label="更多"><svg><use href="#dn"/></svg></button>
  <button class="b" aria-label="曲面"><svg><use href="#surf"/></svg></button><button class="d" aria-label="更多"><svg><use href="#dn"/></svg></button>
  <i class="grip"></i>
  <button class="b" aria-label="修剪"><svg><use href="#trim"/></svg></button>
  <button class="b" aria-label="打断"><svg><use href="#xx"/></svg></button><button class="d" aria-label="更多"><svg><use href="#dn"/></svg></button>
  <i class="grip"></i>
  <button class="b" aria-label="动态平移"><svg><use href="#t1"/></svg></button>
  <button class="b" aria-label="平移"><svg><use href="#t2"/></svg></button>
  <button class="b" aria-label="旋转"><svg><use href="#t3"/></svg></button>
  <button class="b" aria-label="镜像"><svg><use href="#t4"/></svg></button>
  <button class="b" aria-label="比例"><svg><use href="#t5"/></svg></button>
  <button class="b" aria-label="移动到原点"><svg><use href="#t6"/></svg></button>
  <button class="b" aria-label="复制"><svg><use href="#t7"/></svg></button>
  <button class="b" aria-label="投影"><svg><use href="#t8"/></svg></button>
  <i class="sep"></i>
  <button class="b" aria-label="补正"><svg><use href="#off"/></svg></button><button class="d" aria-label="更多"><svg><use href="#dn"/></svg></button>
  <button class="b" aria-label="阵列"><svg><use href="#grid9"/></svg></button>
  <button class="b" aria-label="拖曳"><svg><use href="#drag"/></svg></button><button class="d" aria-label="更多"><svg><use href="#dn"/></svg></button>
  <i class="grip"></i>
  <button class="b" aria-label="平面修剪"><svg><use href="#s1"/></svg></button>
  <button class="b" aria-label="举升"><svg><use href="#s2"/></svg></button>
  <button class="b" aria-label="旋转曲面"><svg><use href="#s3"/></svg></button>
  <button class="b" aria-label="扫描"><svg><use href="#s4"/></svg></button>
  <button class="b" aria-label="拉伸"><svg><use href="#s5"/></svg></button><button class="d" aria-label="更多"><svg><use href="#dn"/></svg></button>
  <i class="sep"></i>
  <button class="b" aria-label="曲面补正"><svg><use href="#s6"/></svg></button>
  <button class="b" aria-label="曲面倒角"><svg><use href="#s7"/></svg></button>
  <button class="b" aria-label="网格"><svg><use href="#s8"/></svg></button>
  <i class="sep"></i>
  <button class="more" aria-label="展开"><svg><use href="#chev"/></svg></button>
</div>

<div class="bar bar3">
  <i class="grip first tall"></i>
  <label class="ax" for="cx">X</label><div class="combo"><input id="cx" value="-29.91937"><svg><use href="#dn"/></svg></div>
  <label class="ax" for="cy">Y</label><div class="combo"><input id="cy" value="28.24905"><svg><use href="#dn"/></svg></div>
  <label class="ax" for="cz">Z</label><div class="combo last"><input id="cz" value="0.0"><svg><use href="#dn"/></svg></div>
  <button class="b" aria-label="快速点"><svg><use href="#pb"/></svg></button>
  <button class="b" aria-label="自动抓点"><svg><use href="#pg"/></svg></button>
  <button class="b" aria-label="交点"><svg><use href="#px"/></svg></button><button class="d dim" aria-label="更多"><svg><use href="#dn"/></svg></button>
  <button class="b" aria-label="帮助"><svg><use href="#help"/></svg></button>
  <i class="grip tall wide"></i>
  <button class="b" aria-label="全部选择"><svg><use href="#sel1"/></svg></button><i class="sep"></i>
  <button class="b" aria-label="单一选择"><svg><use href="#sel2"/></svg></button><i class="sep"></i>
  <button class="b" aria-label="反选"><svg><use href="#sel3"/></svg></button><i class="sep"></i>
  <button class="b" aria-label="范围内"><svg><use href="#sel4"/></svg></button><button class="d" aria-label="更多"><svg><use href="#dn"/></svg></button><i class="sep"></i>
  <button class="b" aria-label="窗选"><svg><use href="#sel5"/></svg></button><button class="d" aria-label="更多"><svg><use href="#dn"/></svg></button>
  <button class="b" aria-label="标准选择"><svg><use href="#cursor"/></svg></button>
  <button class="b" aria-label="实体选择"><svg><use href="#boxok"/></svg></button><i class="sep"></i>
  <button class="b" aria-label="边界"><svg><use href="#b1"/></svg></button>
  <button class="b" aria-label="面"><svg><use href="#b2"/></svg></button>
  <button class="b" aria-label="主体"><svg><use href="#b3"/></svg></button><i class="sep"></i>
  <button class="b" aria-label="背面"><svg><use href="#b4"/></svg></button>
  <button class="b" aria-label="上次选择"><svg><use href="#b5"/></svg></button><i class="sep"></i>
  <button class="b on" aria-label="验证"><svg><use href="#b6"/></svg></button>
  <button class="b" aria-label="选择确认"><svg><use href="#b7"/></svg></button><i class="sep"></i>
  <button class="b" aria-label="取消"><svg><use href="#no"/></svg></button>
  <button class="more" aria-label="展开"><svg><use href="#chev"/></svg></button>
</div>

<main>
  <aside class="col left">
    <i class="vgrip"></i>
    <button class="b" aria-label="实体拉伸"><svg><use href="#l1"/></svg></button>
    <button class="b" aria-label="实体旋转"><svg><use href="#l2"/></svg></button>
    <button class="b" aria-label="实体扫描"><svg><use href="#l3"/></svg></button>
    <button class="b" aria-label="实体举升"><svg><use href="#l4"/></svg></button>
    <i class="vsep"></i>
    <button class="b" aria-label="实体倒圆角"><svg><use href="#l5"/></svg></button><button class="vd" aria-label="更多"><svg><use href="#rt"/></svg></button>
    <button class="b" aria-label="实体倒角"><svg><use href="#l6"/></svg></button><button class="vd" aria-label="更多"><svg><use href="#rt"/></svg></button>
    <i class="vsep"></i>
    <button class="b" aria-label="抽壳"><svg><use href="#l7"/></svg></button>
    <button class="b" aria-label="布尔运算"><svg><use href="#l8"/></svg></button>
    <button class="b" aria-label="实体修剪"><svg><use href="#l9"/></svg></button><button class="vd" aria-label="更多"><svg><use href="#rt"/></svg></button>
    <i class="vsep"></i>
    <button class="b" aria-label="推拉"><svg><use href="#l10"/></svg></button>
    <button class="b" aria-label="实体网格"><svg><use href="#l11"/></svg></button>
    <div class="foot"><button class="cd" aria-label="展开"><svg><use href="#chevd"/></svg></button><i class="vgrip"></i><button class="cd" aria-label="展开"><svg><use href="#chevd"/></svg></button></div>
  </aside>

  <section class="panel">
    <div class="phead"><h2>刀路</h2>
      <button aria-label="菜单"><svg viewBox="0 0 10 10"><path d="M0 3h10L5 8z" fill="#555"/></svg></button>
      <button aria-label="固定"><svg viewBox="0 0 10 10"><path d="M3 1h4v5H3zM1 6h8M5 6v4" fill="none" stroke="#555" stroke-width="1.200"/></svg></button>
      <button aria-label="关闭"><svg viewBox="0 0 10 10"><path d="M1 1l8 8M9 1L1 9" stroke="#555" stroke-width="1.300"/></svg></button>
    </div>
    <div class="ptool">
      <button aria-label="选择全部"><svg><use href="#p1"/></svg></button><button aria-label="取消选择"><svg><use href="#p2"/></svg></button><i class="sep"></i>
      <button aria-label="重建"><svg><use href="#p3"/></svg></button><button aria-label="失效"><svg><use href="#p4"/></svg></button><i class="sep"></i>
      <button aria-label="刀路模拟"><svg><use href="#p5"/></svg></button><button aria-label="实体验证"><svg><use href="#p6"/></svg></button><button aria-label="模拟选项"><svg><use href="#p7"/></svg></button><button class="g1">G1</button><button aria-label="高速进给"><svg><use href="#p9"/></svg></button><i class="sep"></i>
      <button aria-label="删除操作"><svg><use href="#p10"/></svg></button><i class="sep"></i>
      <button aria-label="帮助"><svg><use href="#p11"/></svg></button>
    </div>
    <div class="ptool">
      <button aria-label="锁定"><svg><use href="#k1"/></svg></button><button aria-label="显示刀路"><svg><use href="#k2"/></svg></button><button aria-label="后处理"><svg><use href="#k3"/></svg></button><i class="sep"></i>
      <button aria-label="下移"><svg><use href="#k4"/></svg></button><button aria-label="上移"><svg><use href="#k5"/></svg></button><button aria-label="插入箭头"><svg><use href="#k6"/></svg></button><button aria-label="滚动"><svg><use href="#k7"/></svg></button><i class="sep"></i>
      <button aria-label="显示选择"><svg><use href="#k8"/></svg></button><button aria-label="显示关联"><svg><use href="#k9"/></svg></button><button aria-label="编辑"><svg><use href="#k10"/></svg></button><i class="sep"></i>
      <button aria-label="机床"><svg><use href="#k11"/></svg></button><button aria-label="原点"><svg><use href="#k12"/></svg></button>
    </div>
    <div class="pbody">
      <ul class="tree">
        <li><svg width="44" height="16"><path d="M18 8.500h5M31.500 16v-1" stroke="#111" stroke-dasharray="1 1"/><path d="M8.500 4.500h8v8h-8z" fill="#fff" stroke="#888"/><path d="M10 8.500h5" stroke="#223"/><path d="M22.500.5h6v6h-6zM30.500.5h6v6h-6zM22.500 8.500h6v6h-6zM30.500 8.500h6v6h-6z" fill="#40e8ee" stroke="#102a80"/></svg><span>机床群组-1</span></li>
        <li><svg width="62" height="16"><path d="M31.500 0v16M36 8.500h5" stroke="#111" stroke-dasharray="1 1"/><path d="M27.500 4.500h8v8h-8z" fill="#fff" stroke="#888"/><path d="M29 8.500h5M31.500 6v5" stroke="#223"/><path d="M43 13h14M45 13V6M50 13V2M54.500 13V5" stroke="#1414d8" stroke-width="2"/></svg><span>属性</span><span class="lat">- Mill Default MM</span></li>
        <li><svg width="62" height="16"><path d="M31.500 0v4M36 8.500h5M50.500 14v2" stroke="#111" stroke-dasharray="1 1"/><path d="M27.500 4.500h8v8h-8z" fill="#fff" stroke="#888"/><path d="M29 8.500h5" stroke="#223"/><g fill="#2ee6ea" stroke="#102a80"><circle cx="46" cy="4" r="3"/><circle cx="54.500" cy="4" r="3"/><circle cx="46" cy="12" r="3"/><circle cx="54.500" cy="12" r="3"/></g></svg><span class="hot">刀具群组-1</span></li>
        <li><svg width="80" height="16"><path d="M50.500 0v8.500h11" fill="none" stroke="#111" stroke-dasharray="1 1"/><path d="M61 1l15 7-15 7z" fill="#f00"/><path d="M61 1h2v14h-2z" fill="#800"/></svg></li>
      </ul>
    </div>
    <div class="tabs"><button class="tab on">刀路</button><button class="tab">实体</button></div>
  </section>

  <section class="center">
    <div class="ribbon"><p>功能状态栏</p><button class="fly" aria-label="展开"><svg><use href="#rt"/></svg></button></div>
    <div class="view">
      <p class="big">绘图区：主要是图形的显示、绘图、刀路编辑等等</p>
      <svg class="axes" viewBox="0 0 66 60"><path d="M12.500 48V22" stroke="#0a0" stroke-width="2"/><path d="M9 27l3.500-14L16 27z" fill="#0a8a0a"/><path d="M12 48.500h22" stroke="#a00" stroke-width="2"/><path d="M33 45l14 3.500L33 52z" fill="#900"/><text x="11" y="9" fill="#0e0">Y</text><text x="52" y="53" fill="#f00">X</text></svg>
      <b class="vname">俯视图</b>
      <div class="scale"><b>0.523 mm</b><b>公制</b></div>
    </div>
    <div class="vtabs"><button>主视图面板</button></div>
  </section>

  <aside class="col mid">
    <i class="vgrip"></i>
    <div class="group"><i class="vgrip"></i>
    <button class="b" aria-label="智能标注"><svg><use href="#m1"/></svg></button>
    <button class="b" aria-label="注解"><svg><use href="#m2"/></svg></button>
    <i class="vsep"></i>
    <button class="b" aria-label="水平标注"><svg><use href="#m3"/></svg></button><button class="vd" aria-label="更多"><svg><use href="#rt"/></svg></button>
    <button class="b" aria-label="坐标标注"><svg><use href="#m4"/></svg></button><button class="vd" aria-label="更多"><svg><use href="#rt"/></svg></button>
    <i class="vsep"></i>
    <button class="b" aria-label="剖面线"><svg><use href="#m5"/></svg></button></div>
  </aside>

  <aside class="col right">
    <i class="vgrip"></i>
    <button class="b" aria-label="选择标注"><svg><use href="#r1"/></svg></button>
    <button class="b" aria-label="选择曲面曲线"><svg><use href="#r2"/></svg></button>
    <button class="b" aria-label="选择点"><svg><use href="#r3"/></svg></button>
    <button class="b" aria-label="选择线"><svg><use href="#r4"/></svg></button>
    <button class="b" aria-label="选择圆弧"><svg><use href="#r5"/></svg></button>
    <button class="b" aria-label="选择曲线"><svg><use href="#r6"/></svg></button>
    <button class="b" aria-label="选择曲面"><svg><use href="#r7"/></svg></button>
    <button class="b" aria-label="选择实体"><svg><use href="#r8"/></svg></button>
    <button class="b" aria-label="选择线框"><svg><use href="#r9"/></svg></button>
    <button class="b" aria-label="取消"><svg><use href="#no"/></svg></button>
    <i class="vsep"></i>
    <button class="b" aria-label="按颜色"><svg><use href="#r10"/></svg></button>
    <button class="b" aria-label="按层"><svg><use href="#r11"/></svg></button>
    <button class="b" aria-label="按名称"><svg><use href="#r12"/></svg></button>
    <i class="vsep"></i>
    <button class="b" aria-label="调色"><svg><use href="#r13"/></svg></button>
    <i class="vsep"></i>
    <div class="foot"><button class="cd" aria-label="展开"><svg><use href="#chevd"/></svg></button></div>
  </aside>
</main>

<footer class="status">
  <p>WCS: 俯视图&nbsp; 刀具/绘图平面: 俯视图</p>
  <button class="cell w1 mono">3D</button>
  <button class="cell w2">屏幕视图</button>
  <button class="cell w3 mono">WCS</button>
  <button class="cell w1">平面</button>
  <div class="cell zc"><label for="zd">Z</label><input id="zd" value="0.0"><svg><use href="#vee"/></svg></div>
  <button class="cell ic navy" aria-label="线框颜色"><svg viewBox="0 0 12 12"><path d="M1 1h6v6H1zM5 5h6v6H5z" fill="none" stroke="#444" stroke-width="1.200"/></svg></button>
  <button class="cell ic gray" aria-label="实体颜色"><svg viewBox="0 0 12 12"><path d="M1 2l5-2 5 2v8l-5 2-5-2z" fill="#999"/><path d="M6 4l5-2v8l-5 2z" fill="#333"/></svg></button>
  <button class="cell ic orange" aria-label="曲面颜色"><svg viewBox="0 0 12 12"><path d="M1 3l10-2v9L1 12zM6 2v9M1 7l10-1" fill="#ccc" stroke="#555" stroke-width="1.300"/></svg></button>
  <div class="cell lc"><label for="lv">层别</label><select id="lv"><option>1</option></select><svg><use href="#vee"/></svg></div>
  <button class="cell w4">属性</button>
  <button class="cell w5" aria-label="点样式"><svg class="star" viewBox="0 0 10 10"><path d="M5 1v8M1 5h8M2 8l6-6" stroke="#111"/></svg><svg class="car"><use href="#dn"/></svg></button>
  <button class="cell w6" aria-label="线型"><i class="thick"></i><svg class="car"><use href="#dn"/></svg></button>
  <button class="cell w6" aria-label="线宽"><i class="thin"></i><svg class="car"><use href="#dn"/></svg></button>
  <button class="cell w7">群组</button>
  <button class="cell w8" aria-label="帮助"></button>
</footer>

<div class="edge"></div>
<div class="mark">
  <svg viewBox="0 0 56 40"><ellipse cx="28" cy="20" rx="27" ry="16" fill="#fff" opacity=".6" transform="rotate(-18 28 20)"/><path d="M6 33C-3 22 12 4 34 3 20 7 8 18 10 29c6 7 20 6 28 2C28 39 12 40 6 33z" fill="#3d7ab5"/><path d="M20 4C38-2 54 2 53 14c-1 8-8 14-15 17 7-6 11-14 8-20-4-6-14-8-26-7z" fill="#f08a4a"/><text class="lx" x="12" y="29">X</text><text class="ls" x="31" y="28">S</text></svg>
  <div><strong>资料网</strong><em>ZL.XS1616.COM</em></div>
</div>
</body>
</html>
```
FILE: styles.css
```css
* { box-sizing: border-box; }
html, body { height: 100%; }
body {
  margin: 0;
  display: flex;
  flex-direction: column;
  background: #f0f0f0;
  color: #111;
  font: 12px/16px "Open Sans", "Noto Sans CJK SC", sans-serif;
  overflow: hidden;
  position: relative;
}
h1, h2, p, ul { margin: 0; padding: 0; font-weight: 400; }
button {
  margin: 0; padding: 0; border: 0; background: none;
  color: inherit; font: inherit; white-space: nowrap;
}
input, select { font: inherit; margin: 0; border: 0; padding: 0; border-radius: 0; }
svg { display: block; flex: none; overflow: visible; }
.sprite { position: absolute; width: 0; height: 0; overflow: hidden; }

.title { height: 22px; display: flex; align-items: center; padding-left: 2px; }
.app { width: 16px; height: 16px; }
.title h1 { font: 12px/16px Lato, "Noto Sans CJK SC", sans-serif; color: #aaa; margin: 0 auto 0 7px; }
.win { width: 27px; display: flex; justify-content: center; }
.win svg { width: 9px; height: 9px; }

.menu { height: 23px; display: flex; align-items: center; padding-left: 9px; font-family: Lato, "Noto Sans CJK SC", sans-serif; }
.menu button { padding: 0 7px; height: 22px; }

.bar { display: flex; align-items: center; flex: none; }
.bar1 { height: 38px; }
.bar2 { height: 36px; }
.bar3 { height: 41px; }
.b { width: 33px; height: 33px; flex: none; display: flex; align-items: center; justify-content: center; }
.b svg { width: 24px; height: 24px; }
.b.on { background: #d9d9d9; width: 31px; height: 31px; margin: 0 1px; }
.d { width: 22px; height: 33px; flex: none; display: flex; align-items: center; justify-content: center; }
.d svg { width: 10px; height: 6px; }
.dim { opacity: .5; }
.grip {
  width: 12px; height: 22px; flex: none;
  background: repeating-linear-gradient(#c4c4c4 0 2px, transparent 2px 4px) center / 2px 100% no-repeat;
}
.grip.tall { height: 26px; }
.grip.wide { width: 14px; }
.grip.first { width: 10px; }
.bar1 .grip.first { width: 9px; }
.bar2 .grip.first { width: 11px; }
.sep { width: 8px; height: 32px; flex: none; background: linear-gradient(#c6c6c6, #c6c6c6) center / 1px 100% no-repeat; }
.more { margin: 0 6px 10px auto; width: 16px; }
.more svg { width: 16px; height: 12px; }
.ax { width: 37px; text-align: center; font-size: 25px; line-height: 32px; font-weight: 600; color: #7a7a7a; }
.combo { width: 146px; height: 21px; display: flex; align-items: center; border: 1px solid #a3adbd; padding: 0 4px 0 3px; }
.combo.last { margin-right: 3px; }
.combo input { flex: 1; min-width: 0; background: none; color: #777; }
.combo svg { width: 6px; height: 4px; opacity: .5; }

main { flex: 1; min-height: 0; display: flex; }
.col { display: flex; flex-direction: column; align-items: center; flex: none; }
.left { width: 37px; }
.mid { width: 28px; padding-bottom: 24px; }
.mid .group { margin-top: auto; display: flex; flex-direction: column; align-items: center; }
.right { width: 33px; margin: 0 2px 0 11px; }
.vgrip {
  height: 11px; width: 24px; flex: none;
  background: repeating-linear-gradient(90deg, #c4c4c4 0 2px, transparent 2px 4px) center / 100% 2px no-repeat;
}
.mid > .vgrip { height: 20px; }
.vsep { height: 8px; width: 33px; flex: none; background: linear-gradient(#c6c6c6, #c6c6c6) center / 100% 1px no-repeat; }
.mid .vsep { width: 31px; }
.vd { height: 22px; flex: none; }
.vd svg { width: 6px; height: 10px; }
.foot { margin-top: auto; display: flex; flex-direction: column; align-items: center; padding-bottom: 4px; gap: 7px; align-self: stretch; }
.cd { padding-left: 16px; }
.cd svg { width: 12px; height: 16px; }

.panel { width: 279px; flex: none; display: flex; flex-direction: column; overflow: hidden; }
.phead { height: 34px; display: flex; align-items: center; gap: 7px; padding: 0 3px 0 4px; }
.phead h2 { font-size: 19px; line-height: 24px; margin-right: auto; }
.phead svg { width: 10px; height: 10px; }
.ptool { height: 24px; display: flex; align-items: center; padding-left: 2px; }
.ptool button { width: 22px; height: 24px; flex: none; display: flex; align-items: center; justify-content: center; }
.ptool button svg { width: 17px; height: 17px; }
.ptool .sep { height: 20px; }
.ptool .g1 { color: #8fa9c6; font-size: 12px; }
.pbody { flex: 1; min-height: 0; margin-top: 1px; background: #fafafa; padding: 6px 0 22px 2px; display: flex; }
.tree { flex: 1; list-style: none; background: #fff; border: 1px solid #bbb; padding-top: 1px; color: #000; }
.tree li { display: flex; align-items: center; height: 16px; }
.tree .lat { font: 11px/16px Lato, sans-serif; margin-left: 5px; }
.tree .hot { background: #e4e4e4; }
.tabs { height: 23px; display: flex; align-items: flex-start; border-top: 1px solid #ddd; }
.tab { height: 21px; padding: 0 5px 2px; }
.tab.on { background: #fff; border: 1px solid #c4c4c4; border-top: 0; color: #444; }

.center { flex: 1; min-width: 0; display: flex; flex-direction: column; }
.ribbon { height: 51px; display: flex; justify-content: space-between; padding: 1px 4px 0 195px; }
.ribbon p { padding-top: 9px; }
.fly { width: 11px; background: #e1e1e1; display: flex; align-items: center; justify-content: center; }
.fly svg { width: 5px; height: 9px; }
.view {
  flex: 1; min-height: 0; position: relative;
  border: 7px solid #ff0;
  background: linear-gradient(#97a1ab, #c6cad0 48%, #fff 98%);
}
.view::after { content: ""; position: absolute; inset: auto 0 0; height: 3px; border-top: 1px solid #ddd; border-bottom: 1px solid #bbb; background: #fff; }
.big { position: absolute; left: 0; right: 0; top: 175px; padding-right: 28px; text-align: center; font-size: 29px; line-height: 36px; color: #ff3434; }
.axes { position: absolute; left: 42px; bottom: 47px; width: 66px; height: 60px; }
.axes text { font: bold 12px "DejaVu Sans", sans-serif; }
.vname { position: absolute; left: 19px; bottom: 11px; font-size: 13px; color: #000; }
.scale {
  position: absolute; right: 19px; bottom: 14px; width: 97px; height: 24px;
  border: solid #000; border-width: 0 1px; text-align: center; color: #000;
  background: linear-gradient(#000, #000) center / 100% 1px no-repeat;
  display: flex; flex-direction: column; align-items: center; justify-content: center;
}
.scale b { font: bold 12px/13px "Open Sans", "Noto Sans CJK SC", sans-serif; }
.scale b:first-child { font-size: 13px; }
.vtabs { height: 17px; padding-left: 5px; display: flex; }
.vtabs button { background: #fff; border-right: 1px solid #bbb; padding: 0 5px 5px; font-size: 11px; color: #444; line-height: 12px; }

.status { height: 25px; flex: none; background: #606060; display: flex; align-items: stretch; gap: 2px; padding-top: 2px; }
.status p { color: #fff; flex: 1; padding: 3px 0 0 4px; font-family: Lato, "Noto Sans CJK SC", sans-serif; }
.cell { background: #fff; border: 1px solid #c8c8c8; flex: none; display: flex; align-items: center; justify-content: center; color: #111; }
.mono { font-family: "Liberation Mono", monospace; }
.w1 { width: 25px; }
.w2 { width: 60px; }
.w3 { width: 44px; }
.w4 { width: 32px; background: #f0f0f0; }
.w5 { width: 42px; gap: 14px; }
.w6 { width: 64px; gap: 6px; }
.w7 { width: 39px; color: #888; }
.w8 { width: 17px; }
.zc { width: 98px; justify-content: flex-start; }
.zc label, .lc label { background: #f0f0f0; align-self: stretch; display: flex; align-items: center; }
.zc label { width: 14px; justify-content: center; }
.zc input { width: 61px; height: 16px; color: #fff; margin: 0 7px 2px 2px; background: linear-gradient(#3399ff, #3399ff) left / 17px 100% no-repeat #ffff80; }
.zc svg, .lc svg { width: 10px; height: 8px; }
.ic { width: 31px; flex-direction: column; justify-content: space-between; padding: 2px 1px 1px; }
.ic svg { width: 11px; height: 11px; }
.ic::after { content: ""; height: 5px; align-self: stretch; background: #000080; }
.gray::after { background: #808080; }
.orange::after { background: #ff7f40; }
.lc { width: 129px; padding-right: 4px; }
.lc label { width: 27px; padding-left: 1px; }
.lc select { flex: 1; appearance: none; background: none; padding-left: 4px; align-self: stretch; }
.star { width: 10px; height: 10px; }
.car { width: 6px; height: 4px; }
.thick { width: 38px; height: 3px; background: #000; }
.thin { width: 38px; height: 1px; background: #555; }

.edge { position: absolute; right: 0; top: 15px; width: 5px; height: 78px; background: linear-gradient(#5a4038, #b09a90 10%, #4a3430 22%, #201818 40%, #302428 75%, #000 90%); box-shadow: 0 0 14px 4px #d8d8d8; }
.mark { position: absolute; right: 5px; bottom: 4px; height: 40px; display: flex; align-items: center; background: rgba(255, 255, 255, .5); }
.mark svg { width: 56px; height: 40px; }
.mark text { font: italic 25px "Liberation Serif", serif; }
.mark .lx { fill: #3d7ab5; }
.mark .ls { fill: #f08a4a; }
.mark div { display: flex; flex-direction: column; align-items: center; }
.mark strong { font: 900 24px/26px "Noto Sans CJK SC", sans-serif; color: #4f5f8f; }
.mark em { font: bold 9px/10px "Liberation Mono", monospace; color: #3c4a78; }
```
